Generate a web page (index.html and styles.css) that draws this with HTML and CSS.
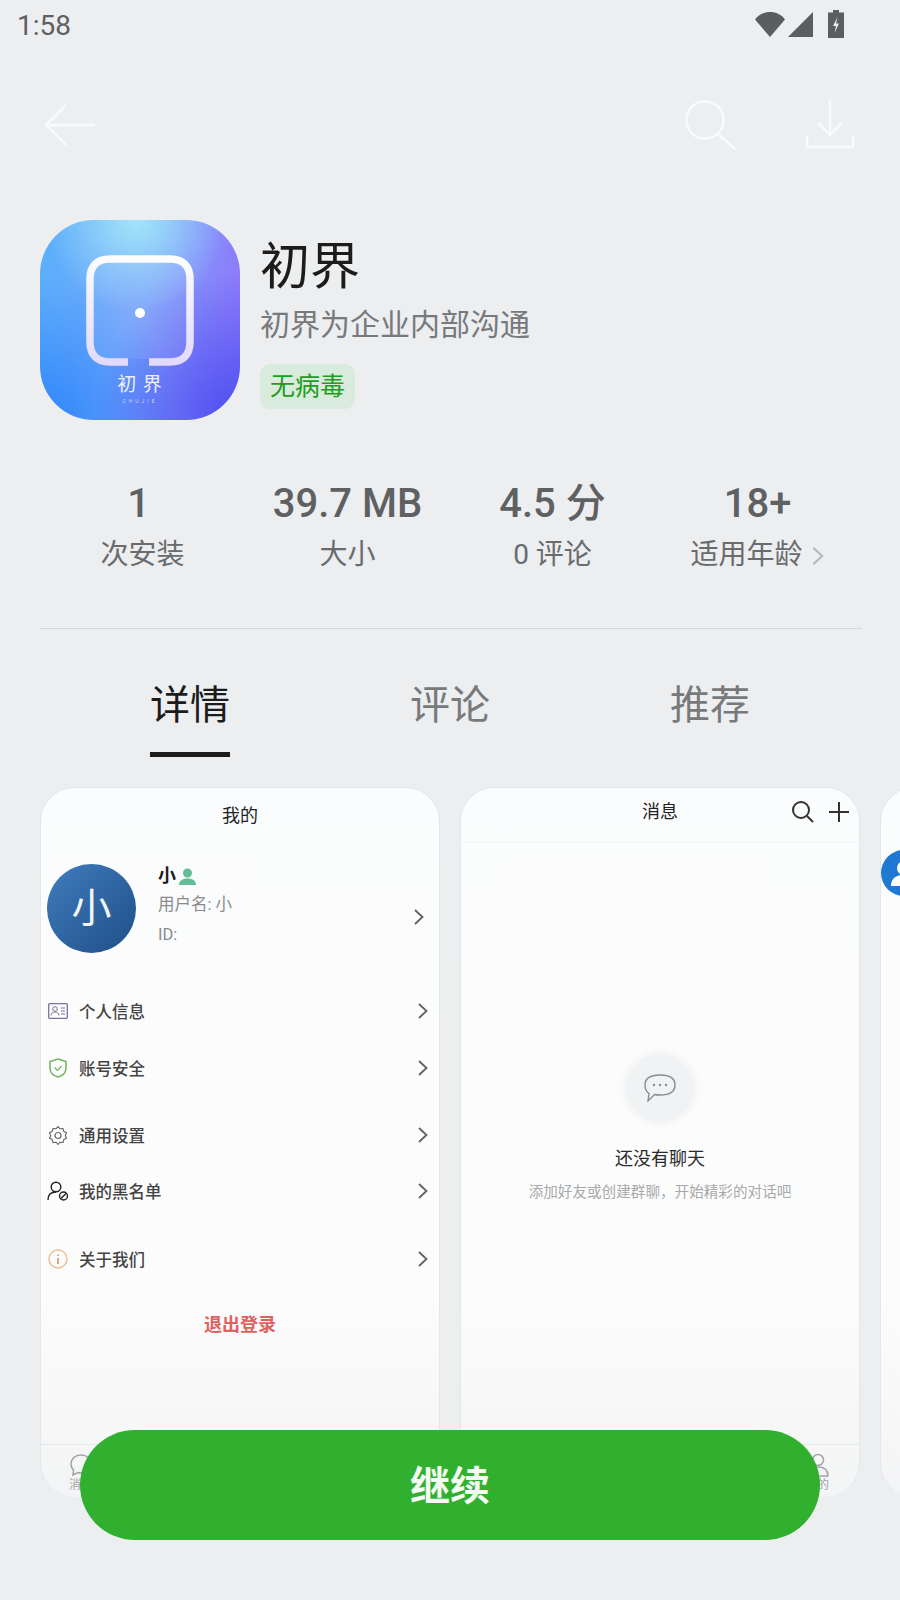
FILE: index.html
```html
<!DOCTYPE html>
<html lang="zh-CN">
<head>
    <meta charset="UTF-8">
    <meta name="viewport" content="width=device-width, initial-scale=1.0">
    <title>初界</title>
    <link rel="stylesheet" href="styles.css">
</head>
<body>
    <svg class="defs" width="0" height="0">
        <symbol id="chev" viewBox="0 0 12 18"><path d="M2 2l7.500 7L2 16" fill="none" stroke="currentColor" stroke-width="1.800"/></symbol>
        <linearGradient id="markFill" x1="0" y1="0" x2="0" y2="1"><stop offset="0" stop-color="#fbfdff"/><stop offset="1" stop-color="#e2dafb"/></linearGradient>
    </svg>

    <div class="page">
        <!-- Statusleiste -->
        <div class="status">
            <span class="time">1:58</span>
            <div class="status-icons">
                <svg width="30" height="26" viewBox="0 0 30 26"><path d="M0 8.500C3.500 3.500 9 1 15 1s11.500 2.500 15 7.500L15 26z" fill="#5c5d5f"/></svg>
                <svg width="26" height="26" viewBox="0 0 26 26"><path d="M25 1v25H0z" fill="#5c5d5f"/></svg>
                <svg class="battery" width="16" height="28" viewBox="0 0 16 28"><path d="M5 0h6v2.500h5V28H0V2.500h5z" fill="#5c5d5f"/><path d="M9.500 7L5 16h3l-1.500 7L11 13.500H8z" fill="#eceef0"/></svg>
            </div>
        </div>

        <!-- Werkzeugleiste -->
        <div class="toolbar">
            <svg class="tool-back" width="52" height="42" viewBox="0 0 52 42"><path d="M22 1L2 21l20 20M2 21h49" fill="none" stroke="#f9fafb" stroke-width="2.500"/></svg>
            <svg class="tool-search" width="54" height="52" viewBox="0 0 54 52"><circle cx="21" cy="21" r="18.500" fill="none" stroke="#f9fafb" stroke-width="2.500"/><path d="M34 35l17 15" fill="none" stroke="#f9fafb" stroke-width="2.500"/></svg>
            <svg class="tool-down" width="50" height="50" viewBox="0 0 50 50"><path d="M25 0v35M13 23l12 12 12-12M2 36v11h46V36" fill="none" stroke="#f9fafb" stroke-width="2.500"/></svg>
        </div>

        <!-- App-Kopf -->
        <div class="app">
            <div class="app-icon">
                <svg class="app-mark" width="108" height="112" viewBox="0 0 108 112">
                    <rect x="7" y="7" width="94" height="97" rx="17" fill="rgba(255,255,255,.07)"/>
                    <path d="M42 107H24C11 107 4 100 4 87V24C4 11 11 4 24 4h60c13 0 20 7 20 20v63c0 13-7 20-20 20H63" fill="none" stroke="url(#markFill)" stroke-width="7.500"/>
                    <circle cx="54" cy="58" r="5" fill="#fff"/>
                </svg>
                <div class="app-name">初 界</div>
                <div class="app-latin">CHUJIE</div>
            </div>
            <div class="app-info">
                <div class="app-title">初界</div>
                <div class="app-sub">初界为企业内部沟通</div>
                <div class="badge">无病毒</div>
            </div>
        </div>

        <!-- Kennzahlen -->
        <div class="stats">
            <div class="stat"><div class="stat-value stat-one">1</div><div class="stat-label">次安装</div></div>
            <div class="stat"><div class="stat-value">39.7 MB</div><div class="stat-label">大小</div></div>
            <div class="stat"><div class="stat-value">4.5 分</div><div class="stat-label">0 评论</div></div>
            <div class="stat">
                <div class="stat-value">18+</div>
                <div class="stat-label">适用年龄<svg class="stat-chev" width="14" height="22"><use href="#chev"/></svg></div>
            </div>
        </div>

        <div class="divider"></div>

        <!-- Tabs -->
        <div class="tabs">
            <div class="tab active">详情</div>
            <div class="tab">评论</div>
            <div class="tab">推荐</div>
        </div>

        <!-- Screenshots -->
        <div class="gallery">
            <div class="shot">
                <div class="shot-title">我的</div>
                <div class="profile">
                    <div class="avatar">小</div>
                    <div class="profile-text">
                        <div class="profile-name">小
                            <svg width="17" height="17" viewBox="0 0 17 17"><circle cx="8.500" cy="5" r="4.500" fill="#63bd96"/><path d="M0 17c0-4 3-6.500 8.500-6.500S17 13 17 17z" fill="#63bd96"/></svg>
                        </div>
                        <div class="profile-line">用户名: 小</div>
                        <div class="profile-line">ID:</div>
                    </div>
                    <svg class="chev profile-chev" width="12" height="18"><use href="#chev"/></svg>
                </div>

                <div class="row row-info">
                    <svg class="row-icon" width="20" height="16" viewBox="0 0 20 16"><rect x=".7" y=".7" width="18.600" height="14.600" rx="1" fill="none" stroke="#77739f" stroke-width="1.300"/><circle cx="7" cy="6" r="2.300" fill="none" stroke="#77739f"/><path d="M3 12.500c0-2.500 2-3.500 4-3.500s4 1 4 3.500M13 5h4M13 8h4M13 11h4" fill="none" stroke="#77739f"/></svg>
                    <span>个人信息</span>
                    <svg class="chev" width="12" height="18"><use href="#chev"/></svg>
                </div>
                <div class="row row-safe">
                    <svg class="row-icon" width="20" height="20" viewBox="0 0 20 20"><path d="M10 1l8 2.500V10c0 5-4 8-8 9-4-1-8-4-8-9V3.500z" fill="none" stroke="#74b25f" stroke-width="1.500"/><path d="M6.500 9.500l3 3 4-4.500" fill="none" stroke="#74b25f" stroke-width="1.200"/></svg>
                    <span>账号安全</span>
                    <svg class="chev" width="12" height="18"><use href="#chev"/></svg>
                </div>
                <div class="row row-set">
                    <svg class="row-icon" width="20" height="20" viewBox="0 0 20 20"><path d="M10 1.500l2 2.300 3-.3.800 2.900 2.700 1.400-1.200 2.700 1.200 2.700-2.700 1.400-.8 2.900-3-.3-2 2.300-2-2.300-3 .3-.8-2.900-2.700-1.400 1.200-2.700-1.200-2.700 2.700-1.400L5 3.500l3 .3z" fill="none" stroke="#666" stroke-width="1.100" stroke-linejoin="round"/><circle cx="10" cy="10.500" r="3" fill="none" stroke="#666" stroke-width="1.200"/></svg>
                    <span>通用设置</span>
                    <svg class="chev" width="12" height="18"><use href="#chev"/></svg>
                </div>
                <div class="row row-black">
                    <svg class="row-icon" width="22" height="20" viewBox="0 0 22 20"><circle cx="9" cy="6" r="4.800" fill="none" stroke="#222" stroke-width="1.400"/><path d="M1 19c0-5 3-8 8-8" fill="none" stroke="#222" stroke-width="1.400"/><circle cx="16.500" cy="15" r="4" fill="none" stroke="#222" stroke-width="1.400"/><path d="M14 17.500l5-5" stroke="#222" stroke-width="1.400"/></svg>
                    <span>我的黑名单</span>
                    <svg class="chev" width="12" height="18"><use href="#chev"/></svg>
                </div>
                <div class="row row-about">
                    <svg class="row-icon" width="20" height="20" viewBox="0 0 20 20"><circle cx="10" cy="10" r="9" fill="none" stroke="#eebd95" stroke-width="1.400"/><path d="M10 5.500v1.500M10 9v6" stroke="#d9a066" stroke-width="1.800"/></svg>
                    <span>关于我们</span>
                    <svg class="chev" width="12" height="18"><use href="#chev"/></svg>
                </div>
                <div class="logout">退出登录</div>
                <div class="shot-nav">
                    <svg width="24" height="24" viewBox="0 0 24 24"><path d="M12 2c6 0 10 4 10 9s-4 9-10 9c-1 0-2 0-3-.5L4 22l.5-5C3 15.500 2 13.500 2 11c0-5 4-9 10-9z" fill="none" stroke="#a3a4a6" stroke-width="1.500"/></svg>
                    <span>消息</span>
                </div>
            </div>

            <div class="shot">
                <div class="msg-head">
                    <div class="shot-title msg-title">消息</div>
                    <svg class="msg-search" width="24" height="24" viewBox="0 0 24 24"><circle cx="10" cy="10" r="8" fill="none" stroke="#333" stroke-width="2"/><path d="M16 16l6 6" stroke="#333" stroke-width="2"/></svg>
                    <svg class="msg-plus" width="22" height="22" viewBox="0 0 22 22"><path d="M11 1v20M1 11h20" stroke="#333" stroke-width="2"/></svg>
                </div>
                <div class="empty">
                    <div class="empty-circle">
                        <svg width="32" height="28" viewBox="0 0 32 28"><path d="M16 1c8 0 15 2.500 15 10s-7 10-15 10c-2 0-4 0-5.500-.5L4 27l1-7.500C2 17.500 1 14.500 1 11 1 3.500 8 1 16 1z" fill="none" stroke="#8a8b8d" stroke-width="1.400"/><circle cx="10" cy="11" r="1.200" fill="#8a8b8d"/><circle cx="16" cy="11" r="1.200" fill="#8a8b8d"/><circle cx="22" cy="11" r="1.200" fill="#8a8b8d"/></svg>
                    </div>
                    <div class="empty-title">还没有聊天</div>
                    <div class="empty-sub">添加好友或创建群聊，开始精彩的对话吧</div>
                </div>
                <div class="shot-nav shot-nav-right">
                    <svg width="22" height="24" viewBox="0 0 22 24"><circle cx="11" cy="7" r="5.500" fill="none" stroke="#a3a4a6" stroke-width="1.500"/><path d="M1 23c0-6 4-9 10-9s10 3 10 9z" fill="none" stroke="#a3a4a6" stroke-width="1.500"/></svg>
                    <span>我的</span>
                </div>
            </div>

            <div class="shot">
                <div class="peek-avatar">
                    <svg width="46" height="46" viewBox="0 0 46 46"><circle cx="23" cy="18" r="7" fill="#fff"/><path d="M10 36c0-8 6-11 13-11s13 3 13 11z" fill="#fff"/></svg>
                </div>
            </div>
        </div>

        <button class="continue">继续</button>
    </div>
</body>
</html>
```

FILE: styles.css
```css
body {
    margin: 0;
    background-color: #eceef0;
    font-family: Roboto, "Noto Sans CJK SC", sans-serif;
}

.defs {
    position: absolute;
}

.page {
    position: relative;
    width: 900px;
    height: 1600px;
    overflow: hidden;
}

.status {
    display: flex;
    justify-content: space-between;
    align-items: center;
    height: 50px;
    padding: 0 56px 0 17px;
}

.time {
    font-size: 28px;
    color: #5f6062;
}

.status-icons {
    display: flex;
    align-items: center;
    gap: 3px;
    margin-top: -3px;
}

.battery {
    margin-left: 11px;
}

.toolbar {
    display: flex;
    align-items: center;
    height: 150px;
    padding: 0 45px 0 44px;
}

.tool-search {
    margin-left: auto;
    margin-right: 67px;
}

.app {
    display: flex;
    gap: 20px;
    height: 200px;
    margin-top: 20px;
    padding-left: 40px;
}

.app-icon {
    display: flex;
    flex-direction: column;
    align-items: center;
    width: 200px;
    height: 200px;
    padding-top: 35px;
    box-sizing: border-box;
    border-radius: 54px;
    background:
        radial-gradient(circle at 48% 0, #a2e6f9 0, rgba(162, 230, 249, 0) 40%),
        radial-gradient(circle at 100% 100%, #4a4ff0 0, rgba(74, 79, 240, 0) 52%),
        radial-gradient(circle at 0 100%, #2f86fb 0, rgba(47, 134, 251, 0) 50%),
        linear-gradient(100deg, #58b0fb 0, #7aa4fa 50%, #9270fa 100%);
}

.app-name {
    margin-top: 6px;
    font-size: 19px;
    letter-spacing: 1px;
    line-height: 24px;
    color: #eef0fd;
}

.app-latin {
    font-size: 5px;
    line-height: 8px;
    letter-spacing: 3px;
    color: #cfd6fb;
}

.app-info {
    display: flex;
    flex-direction: column;
    align-items: flex-start;
}

.app-title {
    margin-top: 16px;
    font-size: 50px;
    line-height: 62px;
    color: #1c1c1c;
}

.app-sub {
    margin-top: 6px;
    font-size: 30px;
    line-height: 42px;
    color: #77797b;
}

.badge {
    margin-top: 18px;
    padding: 0 10px;
    height: 45px;
    border-radius: 10px;
    background-color: #d9ebdc;
    font-size: 25px;
    line-height: 45px;
    color: #1f9d22;
}

.stats {
    display: grid;
    grid-template-columns: repeat(4, 205px);
    margin-top: 58px;
    padding-left: 40px;
    text-align: center;
}

.stat-value {
    font-size: 40px;
    font-weight: 500;
    line-height: 52px;
    color: #5f6062;
}

.stat-one {
    padding-right: 8px;
}

.stat-label {
    margin-top: 2px;
    font-size: 28px;
    line-height: 46px;
    color: #696b6d;
}

.stat-chev {
    margin-left: 8px;
    color: #b5b7b9;
    vertical-align: -3px;
}

.divider {
    height: 1px;
    margin: 50px 38px 0 40px;
    background-color: #d6d8da;
}

.tabs {
    display: grid;
    grid-template-columns: repeat(3, 260px);
    margin-top: 44px;
    padding-left: 60px;
}

.tab {
    justify-self: center;
    width: 80px;
    height: 84px;
    font-size: 40px;
    line-height: 66px;
    text-align: center;
    color: #77797b;
}

.tab.active {
    height: 79px;
    color: #1c1c1c;
    border-bottom: 5px solid #1c1c1c;
}

.gallery {
    display: flex;
    gap: 20px;
    margin-top: 30px;
    padding-left: 40px;
}

.shot {
    position: relative;
    flex: none;
    width: 400px;
    height: 710px;
    box-sizing: border-box;
    border: 1px solid #e4e6e8;
    border-bottom: none;
    border-radius: 34px;
    background: linear-gradient(#fbfcfd 0, #fcfcfc 72%, #f3f4f5 100%);
}

.shot-title {
    padding-top: 15px;
    font-size: 18px;
    line-height: 25px;
    text-align: center;
    color: #222;
}

.profile {
    display: flex;
    align-items: center;
    margin-top: 36px;
    padding: 0 14px 0 6px;
}

.avatar {
    flex: none;
    width: 89px;
    height: 89px;
    border-radius: 50%;
    background: linear-gradient(135deg, #3f7cbe, #1f4f86);
    font-size: 40px;
    line-height: 89px;
    text-align: center;
    color: #f2f6fb;
}

.profile-text {
    flex: 1;
    margin-left: 22px;
    margin-top: -5px;
}

.profile-name {
    display: flex;
    align-items: center;
    gap: 3px;
    font-size: 18px;
    font-weight: 700;
    line-height: 28px;
    color: #1c1c1c;
}

.profile-line {
    font-size: 16.500px;
    line-height: 30px;
    color: #8a8b8d;
}

.profile-chev {
    margin-top: 16px;
}

.row {
    display: flex;
    align-items: center;
    height: 30px;
    padding: 0 10px 0 6px;
    font-size: 16.500px;
    font-weight: 500;
    color: #444;
}

.row span {
    flex: 1;
}

.row-icon {
    width: 22px;
    margin-right: 10px;
}

.chev {
    flex: none;
    color: #5f6164;
}

.row-info {
    margin-top: 43px;
}

.row-safe {
    margin-top: 27px;
}

.row-set {
    margin-top: 37px;
}

.row-black {
    margin-top: 26px;
}

.row-about {
    margin-top: 38px;
}

.logout {
    margin-top: 36px;
    font-size: 18px;
    font-weight: 700;
    line-height: 30px;
    text-align: center;
    color: #e0615f;
}

.shot-nav {
    position: absolute;
    left: 0;
    right: 0;
    top: 656px;
    display: flex;
    flex-direction: column;
    align-items: flex-start;
    height: 46px;
    padding: 8px 0 0 28px;
    border-top: 1px solid #e6e7e9;
    font-size: 12px;
    line-height: 16px;
    color: #a3a4a6;
}

.shot-nav-right {
    align-items: flex-end;
    padding: 8px 30px 0 0;
}

.msg-head {
    position: relative;
    height: 54px;
    border-bottom: 1px solid #f1f2f3;
}

.msg-title {
    padding-top: 11px;
}

.msg-search {
    position: absolute;
    left: 330px;
    top: 12px;
}

.msg-plus {
    position: absolute;
    left: 367px;
    top: 13px;
}

.empty {
    display: flex;
    flex-direction: column;
    align-items: center;
    margin-top: 211px;
}

.empty-circle {
    display: flex;
    align-items: center;
    justify-content: center;
    width: 68px;
    height: 68px;
    border-radius: 50%;
    background-color: #f1f2f3;
    box-shadow: 0 0 6px 3px #f3f4f5;
}

.empty-title {
    margin-top: 24px;
    font-size: 18px;
    line-height: 26px;
    color: #2a2a2a;
}

.empty-sub {
    margin-top: 10px;
    font-size: 14.600px;
    line-height: 20px;
    color: #a8a9ab;
}

.peek-avatar {
    position: absolute;
    left: 0;
    top: 62px;
    display: flex;
    width: 46px;
    height: 46px;
    border-radius: 50%;
    background-color: #1f78d1;
}

.continue {
    position: absolute;
    left: 80px;
    top: 1430px;
    width: 740px;
    height: 110px;
    padding-bottom: 6px;
    border: none;
    border-radius: 55px;
    background-color: #30b02e;
    font-family: inherit;
    font-size: 40px;
    font-weight: 700;
    color: #f4fbf3;
}
```
